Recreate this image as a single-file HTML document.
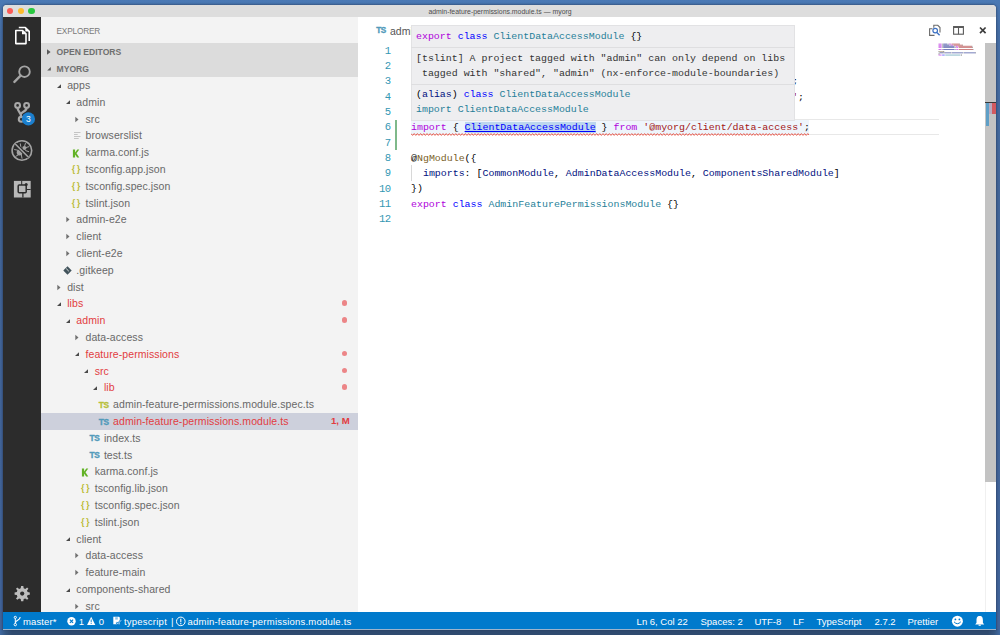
<!DOCTYPE html><html><head><meta charset="utf-8"><style>
*{margin:0;padding:0;box-sizing:border-box}
html,body{width:1000px;height:635px;overflow:hidden}
body{position:relative;font-family:"Liberation Sans",sans-serif;
 background:linear-gradient(180deg,#4a79b5 0%,#466ea5 5%,#436699 30%,#42649a 100%);}
.a{position:absolute}
.row{position:absolute;left:41px;width:317px;height:16.8px;font-size:10.5px;letter-spacing:0.08px;line-height:16.8px;white-space:nowrap}
.st{position:absolute;top:614px;height:16.6px;line-height:16.6px;font-size:9.5px;color:#fff;white-space:nowrap}
.code{font-family:"Liberation Mono",monospace;font-size:9.93px;white-space:pre}
.ln{position:absolute;left:360px;width:30.8px;text-align:right;font-family:"Liberation Mono",monospace;font-size:10.6px;letter-spacing:-0.4px;color:#3497b3;line-height:15.29px;margin-top:1px}
.cl{position:absolute;left:411px;height:15.29px;line-height:15.29px;margin-top:0.9px}
.kw{color:#af00db}.bl{color:#0000ff}.ty{color:#267f99}.s{color:#a31515}.fn{color:#795e26}.vr{color:#001080}.tx{color:#000}
</style></head><body>
<div class="a" style="left:0;top:629px;width:1000px;height:6px;background:linear-gradient(90deg,#4069a0 0%,#34557f 0.6%,#2f4a6f 1.2%,#2f4a6f 98.8%,#34557f 99.4%,#4069a0 100%)"></div>
<div class="a" style="left:3px;top:5px;width:993px;height:624px;border-radius:4px 4px 0 0;background:#fff;overflow:hidden;box-shadow:0 0 2px 1px rgba(20,30,50,0.35)">
<div class="a" style="left:0;top:0;width:993px;height:12px;background:#dddddd"></div>
</div>
<div class="a" style="left:7.00px;top:7.60px;width:6.4px;height:6.4px;border-radius:50%;background:#fc5b57"></div>
<div class="a" style="left:17.60px;top:7.60px;width:6.4px;height:6.4px;border-radius:50%;background:#fdbc2e"></div>
<div class="a" style="left:28.30px;top:7.60px;width:6.4px;height:6.4px;border-radius:50%;background:#28c840"></div>
<div class="a" style="left:300px;top:7px;width:400px;text-align:center;font-size:6.9px;line-height:10px;color:#4d4d4d">admin-feature-permissions.module.ts — myorg</div>
<div class="a" style="left:3px;top:17px;width:38px;height:595.5px;background:#2c2c2c"></div>
<svg class="a" style="left:0;top:0" width="45" height="635" viewBox="0 0 45 635">
<g fill="none" stroke="#ffffff" stroke-width="1.6" stroke-linejoin="round">
 <path d="M18.8 27.5 H25.3 L29.2 31.4 V41"/>
 <path d="M15.8 30.5 H22.6 L26 33.9 V43.6 H15.8 Z"/>
</g>
<path d="M22 30.6 V34.3 H25.8 Z" fill="#fff"/>
<path d="M25.3 27.5 V31.4 H29.2 Z" fill="#fff"/>
<g fill="none" stroke="#a4a4a4" stroke-width="1.9" stroke-linecap="round">
 <circle cx="24.5" cy="71.7" r="5.3"/>
 <path d="M20.6 75.7 L14.4 81.9" stroke-width="2.4"/>
</g>
<g fill="none" stroke="#a8a8a8" stroke-width="2.1">
 <circle cx="17.6" cy="105.4" r="2.4"/>
 <circle cx="26.6" cy="105.4" r="2.4"/>
 <circle cx="21.2" cy="119.3" r="2.4"/>
 <path d="M17.6 107.8 C17.6 112.5 21.2 111.5 21.2 116.9" stroke-width="2.3"/>
 <path d="M26.6 107.8 C26.6 112 21.2 111.5 21.2 114" stroke-width="2.3"/>
</g>
<circle cx="28.4" cy="118.9" r="6.6" fill="#1b7fcd"/>
<text x="28.4" y="122.1" text-anchor="middle" font-family="Liberation Sans" font-size="8.6" fill="#fff">3</text>
<g fill="none" stroke="#a4a4a4" stroke-width="1.6">
 <circle cx="21.9" cy="150.5" r="9.8"/>
</g>
<g stroke="#a4a4a4" stroke-width="1" fill="none" stroke-linecap="round">
 <path d="M18.2 150.3 L14.6 149.6"/>
 <path d="M18.4 154.8 L15.8 156.3"/>
 <path d="M21.3 154.6 L22 158.3"/>
 <path d="M20.9 147.6 L20.3 143.8"/>
 <path d="M24.6 146.1 L25.4 143.5"/>
 <path d="M26.1 147.5 L28.8 146.7"/>
 <path d="M25.6 150.6 L28.6 151.6"/>
</g>
<g fill="#a4a4a4">
 <ellipse cx="19.6" cy="152.4" rx="2.9" ry="3"/>
 <circle cx="24.4" cy="148" r="2.1"/>
</g>
<path d="M15.3 144 L28.5 157.2" stroke="#2c2c2c" stroke-width="3.4"/>
<path d="M15.3 144 L28.5 157.2" stroke="#a4a4a4" stroke-width="1.6"/>
<rect x="13.9" y="180.9" width="16.8" height="16.6" fill="#b8b8b8"/>
<g fill="none" stroke="#2c2c2c">
 <rect x="18.2" y="185.05" width="8" height="7.8" rx="1" stroke-width="1.5"/>
 <path d="M21.7 180.9 V185" stroke-width="1"/>
 <path d="M22.9 192.8 V197.5" stroke-width="1.3"/>
 <path d="M26.9 189.5 H30.7" stroke-width="1"/>
</g>
<circle cx="26.2" cy="184.4" r="1.5" fill="#2c2c2c"/>
<g fill="#bdbdbd">
 <path d="M22.2 586 L23.3 586 L23.7 588.3 L25.3 588.9 L27.1 587.4 L28.4 588.7 L27 590.5 L27.6 592.1 L29.8 592.5 L29.8 594.7 L27.6 595.1 L27 596.7 L28.4 598.5 L27.1 599.8 L25.3 598.4 L23.7 599 L23.3 601.2 L21.1 601.2 L20.7 599 L19.1 598.4 L17.3 599.8 L16 598.5 L17.4 596.7 L16.8 595.1 L14.6 594.7 L14.6 592.5 L16.8 592.1 L17.4 590.5 L16 588.7 L17.3 587.4 L19.1 588.9 L20.7 588.3 L21.1 586 Z"/>
</g>
<circle cx="22.2" cy="593.6" r="2.1" fill="#2c2c2c"/>
</svg>
<div class="a" style="left:41px;top:17px;width:317px;height:595.5px;background:#f3f3f3"></div>
<div class="a" style="left:56.5px;top:26px;font-size:8.3px;line-height:10px;color:#7a7a7a;letter-spacing:-0.2px">EXPLORER</div>
<div class="a" style="left:41px;top:43.3px;width:317px;height:33.7px;background:#dcdcdc"></div>
<div class="a" style="left:56.5px;top:44px;font-size:8.6px;line-height:16.8px;font-weight:bold;color:#6f6f6f">OPEN EDITORS</div>
<div class="a" style="left:56.5px;top:60.8px;font-size:8.6px;line-height:16.8px;font-weight:bold;color:#6f6f6f">MYORG</div>
<svg class="a" style="left:46px;top:48px" width="6" height="8" viewBox="0 0 6 8"><path d="M1 1.2 L4.6 4 L1 6.8 Z" fill="#5a5a5a"/></svg>
<svg class="a" style="left:46px;top:65.5px" width="6" height="6" viewBox="0 0 6 6"><path d="M4.8 1 V4.6 H1.2 Z" fill="#5a5a5a"/></svg>
<div class="a" style="left:41px;top:17px;width:317px;height:595.5px;overflow:hidden">
<div class="row" style="left:0;top:60.00px;">
<svg class="a" style="left:14.50px;top:6.5px" width="6" height="6" viewBox="0 0 6 6"><path d="M5 0.3 V4.1 H1 Z" fill="#4a4a4a"/></svg>
<div class="a" style="left:26.20px;top:0px;color:#686868">apps</div>
</div>
<div class="row" style="left:0;top:76.80px;">
<svg class="a" style="left:23.67px;top:6.5px" width="6" height="6" viewBox="0 0 6 6"><path d="M5 0.3 V4.1 H1 Z" fill="#4a4a4a"/></svg>
<div class="a" style="left:35.37px;top:0px;color:#686868">admin</div>
</div>
<div class="row" style="left:0;top:93.60px;">
<svg class="a" style="left:33.04px;top:5px" width="6" height="7" viewBox="0 0 6 7"><path d="M1.3 0.8 L4.5 3.5 L1.3 6.2 Z" fill="#707070"/></svg>
<div class="a" style="left:44.54px;top:0px;color:#686868">src</div>
</div>
<div class="row" style="left:0;top:110.40px;">
<svg class="a" style="left:33.34px;top:4.1px" width="8" height="9" viewBox="0 0 8 9"><path d="M0 1.5h6.5M0 3.5h3.7M0 5.5h6.5M0 7.5h4.7" stroke="#c4c4c4" stroke-width="1"/></svg>
<div class="a" style="left:44.54px;top:0px;color:#686868">browserslist</div>
</div>
<div class="row" style="left:0;top:127.20px;">
<svg class="a" style="left:31.04px;top:4.5px" width="8" height="9" viewBox="0 0 8 9"><path d="M0.9 0.5 H3.1 V3.5 L5.3 0.5 H7.3 L4.5 4.2 L7.3 8.4 H5.1 L3.1 5.4 V8.4 H0.9 Z" fill="#62b226"/></svg>
<div class="a" style="left:44.54px;top:0px;color:#686868">karma.conf.js</div>
</div>
<div class="row" style="left:0;top:144.00px;">
<div class="a" style="left:30.74px;top:0;font-size:9px;font-weight:bold;color:#bcbc38;line-height:16px;letter-spacing:1.6px">{}</div>
<div class="a" style="left:44.54px;top:0px;color:#686868">tsconfig.app.json</div>
</div>
<div class="row" style="left:0;top:160.80px;">
<div class="a" style="left:30.74px;top:0;font-size:9px;font-weight:bold;color:#bcbc38;line-height:16px;letter-spacing:1.6px">{}</div>
<div class="a" style="left:44.54px;top:0px;color:#686868">tsconfig.spec.json</div>
</div>
<div class="row" style="left:0;top:177.60px;">
<div class="a" style="left:30.74px;top:0;font-size:9px;font-weight:bold;color:#bcbc38;line-height:16px;letter-spacing:1.6px">{}</div>
<div class="a" style="left:44.54px;top:0px;color:#686868">tslint.json</div>
</div>
<div class="row" style="left:0;top:194.40px;">
<svg class="a" style="left:23.87px;top:5px" width="6" height="7" viewBox="0 0 6 7"><path d="M1.3 0.8 L4.5 3.5 L1.3 6.2 Z" fill="#707070"/></svg>
<div class="a" style="left:35.37px;top:0px;color:#686868">admin-e2e</div>
</div>
<div class="row" style="left:0;top:211.20px;">
<svg class="a" style="left:23.87px;top:5px" width="6" height="7" viewBox="0 0 6 7"><path d="M1.3 0.8 L4.5 3.5 L1.3 6.2 Z" fill="#707070"/></svg>
<div class="a" style="left:35.37px;top:0px;color:#686868">client</div>
</div>
<div class="row" style="left:0;top:228.00px;">
<svg class="a" style="left:23.87px;top:5px" width="6" height="7" viewBox="0 0 6 7"><path d="M1.3 0.8 L4.5 3.5 L1.3 6.2 Z" fill="#707070"/></svg>
<div class="a" style="left:35.37px;top:0px;color:#686868">client-e2e</div>
</div>
<div class="row" style="left:0;top:244.80px;">
<svg class="a" style="left:22.17px;top:3.8px" width="9" height="9" viewBox="0 0 9 9"><path d="M4.5 0.3 L8.7 4.5 L4.5 8.7 L0.3 4.5 Z" fill="#41535b"/><path d="M3.2 2.6 L5.8 5.2" stroke="#f3f3f3" stroke-width="0.9"/></svg>
<div class="a" style="left:35.37px;top:0px;color:#686868">.gitkeep</div>
</div>
<div class="row" style="left:0;top:261.60px;">
<svg class="a" style="left:14.70px;top:5px" width="6" height="7" viewBox="0 0 6 7"><path d="M1.3 0.8 L4.5 3.5 L1.3 6.2 Z" fill="#707070"/></svg>
<div class="a" style="left:26.20px;top:0px;color:#686868">dist</div>
</div>
<div class="row" style="left:0;top:278.40px;">
<svg class="a" style="left:14.50px;top:6.5px" width="6" height="6" viewBox="0 0 6 6"><path d="M5 0.3 V4.1 H1 Z" fill="#4a4a4a"/></svg>
<div class="a" style="left:26.20px;top:0px;color:#e23c3f">libs</div>
<div class="a" style="left:300.9px;top:5.1px;width:5.6px;height:5.6px;border-radius:50%;background:#ec8587"></div>
</div>
<div class="row" style="left:0;top:295.20px;">
<svg class="a" style="left:23.67px;top:6.5px" width="6" height="6" viewBox="0 0 6 6"><path d="M5 0.3 V4.1 H1 Z" fill="#4a4a4a"/></svg>
<div class="a" style="left:35.37px;top:0px;color:#e23c3f">admin</div>
<div class="a" style="left:300.9px;top:5.1px;width:5.6px;height:5.6px;border-radius:50%;background:#ec8587"></div>
</div>
<div class="row" style="left:0;top:312.00px;">
<svg class="a" style="left:33.04px;top:5px" width="6" height="7" viewBox="0 0 6 7"><path d="M1.3 0.8 L4.5 3.5 L1.3 6.2 Z" fill="#707070"/></svg>
<div class="a" style="left:44.54px;top:0px;color:#686868">data-access</div>
</div>
<div class="row" style="left:0;top:328.80px;">
<svg class="a" style="left:32.84px;top:6.5px" width="6" height="6" viewBox="0 0 6 6"><path d="M5 0.3 V4.1 H1 Z" fill="#4a4a4a"/></svg>
<div class="a" style="left:44.54px;top:0px;color:#e23c3f">feature-permissions</div>
<div class="a" style="left:300.9px;top:5.1px;width:5.6px;height:5.6px;border-radius:50%;background:#ec8587"></div>
</div>
<div class="row" style="left:0;top:345.60px;">
<svg class="a" style="left:42.01px;top:6.5px" width="6" height="6" viewBox="0 0 6 6"><path d="M5 0.3 V4.1 H1 Z" fill="#4a4a4a"/></svg>
<div class="a" style="left:53.71px;top:0px;color:#e23c3f">src</div>
<div class="a" style="left:300.9px;top:5.1px;width:5.6px;height:5.6px;border-radius:50%;background:#ec8587"></div>
</div>
<div class="row" style="left:0;top:362.40px;">
<svg class="a" style="left:51.18px;top:6.5px" width="6" height="6" viewBox="0 0 6 6"><path d="M5 0.3 V4.1 H1 Z" fill="#4a4a4a"/></svg>
<div class="a" style="left:62.88px;top:0px;color:#e23c3f">lib</div>
<div class="a" style="left:300.9px;top:5.1px;width:5.6px;height:5.6px;border-radius:50%;background:#ec8587"></div>
</div>
<div class="row" style="left:0;top:379.20px;">
<div class="a" style="left:57.75px;top:0.5px;font-size:8.3px;font-weight:bold;color:#b8c03a;line-height:16px;letter-spacing:-0.3px;-webkit-text-stroke:0.35px #b8c03a">TS</div>
<div class="a" style="left:72.05px;top:0px;color:#686868">admin-feature-permissions.module.spec.ts</div>
</div>
<div class="row" style="left:0;top:396.00px;background:#cdd0dc;">
<div class="a" style="left:57.75px;top:0.5px;font-size:8.3px;font-weight:bold;color:#519aba;line-height:16px;letter-spacing:-0.3px;-webkit-text-stroke:0.35px #519aba">TS</div>
<div class="a" style="left:72.05px;top:0px;color:#e23c3f">admin-feature-permissions.module.ts</div>
<div class="a" style="left:290px;top:0px;color:#e23c3f;font-weight:bold;font-size:9.6px;letter-spacing:0">1, M</div>
</div>
<div class="row" style="left:0;top:412.80px;">
<div class="a" style="left:48.58px;top:0.5px;font-size:8.3px;font-weight:bold;color:#519aba;line-height:16px;letter-spacing:-0.3px;-webkit-text-stroke:0.35px #519aba">TS</div>
<div class="a" style="left:62.88px;top:0px;color:#686868">index.ts</div>
</div>
<div class="row" style="left:0;top:429.60px;">
<div class="a" style="left:48.58px;top:0.5px;font-size:8.3px;font-weight:bold;color:#519aba;line-height:16px;letter-spacing:-0.3px;-webkit-text-stroke:0.35px #519aba">TS</div>
<div class="a" style="left:62.88px;top:0px;color:#686868">test.ts</div>
</div>
<div class="row" style="left:0;top:446.40px;">
<svg class="a" style="left:40.21px;top:4.5px" width="8" height="9" viewBox="0 0 8 9"><path d="M0.9 0.5 H3.1 V3.5 L5.3 0.5 H7.3 L4.5 4.2 L7.3 8.4 H5.1 L3.1 5.4 V8.4 H0.9 Z" fill="#62b226"/></svg>
<div class="a" style="left:53.71px;top:0px;color:#686868">karma.conf.js</div>
</div>
<div class="row" style="left:0;top:463.20px;">
<div class="a" style="left:39.91px;top:0;font-size:9px;font-weight:bold;color:#bcbc38;line-height:16px;letter-spacing:1.6px">{}</div>
<div class="a" style="left:53.71px;top:0px;color:#686868">tsconfig.lib.json</div>
</div>
<div class="row" style="left:0;top:480.00px;">
<div class="a" style="left:39.91px;top:0;font-size:9px;font-weight:bold;color:#bcbc38;line-height:16px;letter-spacing:1.6px">{}</div>
<div class="a" style="left:53.71px;top:0px;color:#686868">tsconfig.spec.json</div>
</div>
<div class="row" style="left:0;top:496.80px;">
<div class="a" style="left:39.91px;top:0;font-size:9px;font-weight:bold;color:#bcbc38;line-height:16px;letter-spacing:1.6px">{}</div>
<div class="a" style="left:53.71px;top:0px;color:#686868">tslint.json</div>
</div>
<div class="row" style="left:0;top:513.60px;">
<svg class="a" style="left:23.67px;top:6.5px" width="6" height="6" viewBox="0 0 6 6"><path d="M5 0.3 V4.1 H1 Z" fill="#4a4a4a"/></svg>
<div class="a" style="left:35.37px;top:0px;color:#686868">client</div>
</div>
<div class="row" style="left:0;top:530.40px;">
<svg class="a" style="left:33.04px;top:5px" width="6" height="7" viewBox="0 0 6 7"><path d="M1.3 0.8 L4.5 3.5 L1.3 6.2 Z" fill="#707070"/></svg>
<div class="a" style="left:44.54px;top:0px;color:#686868">data-access</div>
</div>
<div class="row" style="left:0;top:547.20px;">
<svg class="a" style="left:33.04px;top:5px" width="6" height="7" viewBox="0 0 6 7"><path d="M1.3 0.8 L4.5 3.5 L1.3 6.2 Z" fill="#707070"/></svg>
<div class="a" style="left:44.54px;top:0px;color:#686868">feature-main</div>
</div>
<div class="row" style="left:0;top:564.00px;">
<svg class="a" style="left:23.67px;top:6.5px" width="6" height="6" viewBox="0 0 6 6"><path d="M5 0.3 V4.1 H1 Z" fill="#4a4a4a"/></svg>
<div class="a" style="left:35.37px;top:0px;color:#686868">components-shared</div>
</div>
<div class="row" style="left:0;top:580.80px;">
<svg class="a" style="left:33.04px;top:5px" width="6" height="7" viewBox="0 0 6 7"><path d="M1.3 0.8 L4.5 3.5 L1.3 6.2 Z" fill="#707070"/></svg>
<div class="a" style="left:44.54px;top:0px;color:#686868">src</div>
</div>
</div>
<div class="a" style="left:376.2px;top:24.8px;font-size:8.2px;font-weight:bold;color:#519aba;line-height:12px;letter-spacing:-0.5px;-webkit-text-stroke:0.35px #519aba">TS</div>
<div class="a" style="left:390px;top:24px;font-size:10.5px;color:#555;line-height:14px">admin-feature-permissions.module.ts</div>
<div class="ln" style="top:42.90px">1</div>
<div class="ln" style="top:58.19px">2</div>
<div class="ln" style="top:73.48px">3</div>
<div class="ln" style="top:88.77px">4</div>
<div class="ln" style="top:104.06px">5</div>
<div class="ln" style="top:119.35px">6</div>
<div class="ln" style="top:134.64px">7</div>
<div class="ln" style="top:149.93px">8</div>
<div class="ln" style="top:165.22px">9</div>
<div class="ln" style="top:180.51px">10</div>
<div class="ln" style="top:195.80px">11</div>
<div class="ln" style="top:211.09px">12</div>
<div class="a" style="left:411px;top:119.45px;width:527.6px;height:15.45px;border-top:1px solid #e8e8e8;border-bottom:1px solid #e8e8e8"></div>
<div class="a" style="left:411px;top:119.75px;width:398px;height:14.09px;background:#eef5fb"></div>
<div class="a" style="left:395px;top:119.8px;width:2.2px;height:30.7px;background:#7fb98a"></div>
<div class="a" style="left:411px;top:165.22px;width:1px;height:15.29px;background:#d8d8d8"></div>
<div class="cl code" style="top:42.90px"><span class="kw">import</span><span class="tx"> { </span><span class="vr">NgModule</span><span class="tx"> } </span><span class="kw">from</span> <span class="s">'@angular/core'</span><span class="tx">;</span></div>
<div class="cl code" style="top:58.19px"><span class="kw">import</span><span class="tx"> { </span><span class="vr">CommonModule</span><span class="tx"> } </span><span class="kw">from</span> <span class="s">'@angular/common'</span><span class="tx">;</span></div>
<div class="cl code" style="top:73.48px"><span class="kw">import</span><span class="tx"> { </span><span class="vr">AdminDataAccessModule</span><span class="tx"> } </span><span class="kw">from</span> <span class="s">'@myorg/admin/data-access'</span><span class="tx">;</span></div>
<div class="cl code" style="top:88.77px"><span class="kw">import</span><span class="tx"> { </span><span class="vr">ComponentsSharedModule</span><span class="tx"> } </span><span class="kw">from</span> <span class="s">'@myorg/components-shared'</span><span class="tx">;</span></div>
<div class="cl code" style="top:104.06px"></div>
<div class="cl code" style="top:119.35px"><span class="kw">import</span><span class="tx"> { </span><span class="vr" style="background:#bcd6ee;color:#0000ff;text-decoration:underline">ClientDataAccessModule</span><span class="tx"> } </span><span class="kw">from</span> <span class="s">'@myorg/client/data-access'</span><span class="tx">;</span></div>
<div class="cl code" style="top:134.64px"></div>
<div class="cl code" style="top:149.93px"><span class="tx">@</span><span class="fn">NgModule</span><span class="tx">({</span></div>
<div class="cl code" style="top:165.22px"><span class="tx">  </span><span class="vr">imports</span><span class="tx">: [</span><span class="vr">CommonModule</span><span class="tx">, </span><span class="vr">AdminDataAccessModule</span><span class="tx">, </span><span class="vr">ComponentsSharedModule</span><span class="tx">]</span></div>
<div class="cl code" style="top:180.51px"><span class="tx">})</span></div>
<div class="cl code" style="top:195.80px"><span class="kw">export</span> <span class="bl">class</span> <span class="ty">AdminFeaturePermissionsModule</span><span class="tx"> {}</span></div>
<div class="cl code" style="top:211.09px"></div>
<svg class="a" style="left:411px;top:132.65px" width="398" height="3" viewBox="0 0 398 3"><path d="M0.0 0.6 L1.6 2.4 L3.2 0.6 L4.8 2.4 L6.4 0.6 L8.0 2.4 L9.6 0.6 L11.2 2.4 L12.8 0.6 L14.4 2.4 L16.0 0.6 L17.6 2.4 L19.2 0.6 L20.8 2.4 L22.4 0.6 L24.0 2.4 L25.6 0.6 L27.2 2.4 L28.8 0.6 L30.4 2.4 L32.0 0.6 L33.6 2.4 L35.2 0.6 L36.8 2.4 L38.4 0.6 L40.0 2.4 L41.6 0.6 L43.2 2.4 L44.8 0.6 L46.4 2.4 L48.0 0.6 L49.6 2.4 L51.2 0.6 L52.8 2.4 L54.4 0.6 L56.0 2.4 L57.6 0.6 L59.2 2.4 L60.8 0.6 L62.4 2.4 L64.0 0.6 L65.6 2.4 L67.2 0.6 L68.8 2.4 L70.4 0.6 L72.0 2.4 L73.6 0.6 L75.2 2.4 L76.8 0.6 L78.4 2.4 L80.0 0.6 L81.6 2.4 L83.2 0.6 L84.8 2.4 L86.4 0.6 L88.0 2.4 L89.6 0.6 L91.2 2.4 L92.8 0.6 L94.4 2.4 L96.0 0.6 L97.6 2.4 L99.2 0.6 L100.8 2.4 L102.4 0.6 L104.0 2.4 L105.6 0.6 L107.2 2.4 L108.8 0.6 L110.4 2.4 L112.0 0.6 L113.6 2.4 L115.2 0.6 L116.8 2.4 L118.4 0.6 L120.0 2.4 L121.6 0.6 L123.2 2.4 L124.8 0.6 L126.4 2.4 L128.0 0.6 L129.6 2.4 L131.2 0.6 L132.8 2.4 L134.4 0.6 L136.0 2.4 L137.6 0.6 L139.2 2.4 L140.8 0.6 L142.4 2.4 L144.0 0.6 L145.6 2.4 L147.2 0.6 L148.8 2.4 L150.4 0.6 L152.0 2.4 L153.6 0.6 L155.2 2.4 L156.8 0.6 L158.4 2.4 L160.0 0.6 L161.6 2.4 L163.2 0.6 L164.8 2.4 L166.4 0.6 L168.0 2.4 L169.6 0.6 L171.2 2.4 L172.8 0.6 L174.4 2.4 L176.0 0.6 L177.6 2.4 L179.2 0.6 L180.8 2.4 L182.4 0.6 L184.0 2.4 L185.6 0.6 L187.2 2.4 L188.8 0.6 L190.4 2.4 L192.0 0.6 L193.6 2.4 L195.2 0.6 L196.8 2.4 L198.4 0.6 L200.0 2.4 L201.6 0.6 L203.2 2.4 L204.8 0.6 L206.4 2.4 L208.0 0.6 L209.6 2.4 L211.2 0.6 L212.8 2.4 L214.4 0.6 L216.0 2.4 L217.6 0.6 L219.2 2.4 L220.8 0.6 L222.4 2.4 L224.0 0.6 L225.6 2.4 L227.2 0.6 L228.8 2.4 L230.4 0.6 L232.0 2.4 L233.6 0.6 L235.2 2.4 L236.8 0.6 L238.4 2.4 L240.0 0.6 L241.6 2.4 L243.2 0.6 L244.8 2.4 L246.4 0.6 L248.0 2.4 L249.6 0.6 L251.2 2.4 L252.8 0.6 L254.4 2.4 L256.0 0.6 L257.6 2.4 L259.2 0.6 L260.8 2.4 L262.4 0.6 L264.0 2.4 L265.6 0.6 L267.2 2.4 L268.8 0.6 L270.4 2.4 L272.0 0.6 L273.6 2.4 L275.2 0.6 L276.8 2.4 L278.4 0.6 L280.0 2.4 L281.6 0.6 L283.2 2.4 L284.8 0.6 L286.4 2.4 L288.0 0.6 L289.6 2.4 L291.2 0.6 L292.8 2.4 L294.4 0.6 L296.0 2.4 L297.6 0.6 L299.2 2.4 L300.8 0.6 L302.4 2.4 L304.0 0.6 L305.6 2.4 L307.2 0.6 L308.8 2.4 L310.4 0.6 L312.0 2.4 L313.6 0.6 L315.2 2.4 L316.8 0.6 L318.4 2.4 L320.0 0.6 L321.6 2.4 L323.2 0.6 L324.8 2.4 L326.4 0.6 L328.0 2.4 L329.6 0.6 L331.2 2.4 L332.8 0.6 L334.4 2.4 L336.0 0.6 L337.6 2.4 L339.2 0.6 L340.8 2.4 L342.4 0.6 L344.0 2.4 L345.6 0.6 L347.2 2.4 L348.8 0.6 L350.4 2.4 L352.0 0.6 L353.6 2.4 L355.2 0.6 L356.8 2.4 L358.4 0.6 L360.0 2.4 L361.6 0.6 L363.2 2.4 L364.8 0.6 L366.4 2.4 L368.0 0.6 L369.6 2.4 L371.2 0.6 L372.8 2.4 L374.4 0.6 L376.0 2.4 L377.6 0.6 L379.2 2.4 L380.8 0.6 L382.4 2.4 L384.0 0.6 L385.6 2.4 L387.2 0.6 L388.8 2.4 L390.4 0.6 L392.0 2.4 L393.6 0.6 L395.2 2.4 L396.8 0.6 L398.4 2.4" stroke="#e51400" stroke-width="0.9" fill="none" opacity="0.75"/></svg>
<div class="a" style="left:411px;top:25px;width:384px;height:95.8px;background:#eeeef0;border:1px solid #e2e2e4"></div>
<div class="a" style="left:411px;top:46.8px;width:384px;height:1px;background:#dedee0"></div>
<div class="a" style="left:411px;top:83.8px;width:384px;height:1px;background:#dedee0"></div>
<div class="a code" style="left:416px;top:28.6px;line-height:15px"><span class="kw">export</span> <span class="bl">class</span> <span class="ty">ClientDataAccessModule</span><span class="tx"> {}</span></div>
<div class="a code" style="left:416px;top:50.5px;line-height:15px;color:#333">[tslint] A project tagged with "admin" can only depend on libs
 tagged with "shared", "admin" (nx-enforce-module-boundaries)</div>
<div class="a code" style="left:416px;top:87.3px;line-height:15px"><span class="tx">(</span><span class="vr">alias</span><span class="tx">) </span><span class="bl">class</span> <span class="ty">ClientDataAccessModule</span>
<span class="ty">import ClientDataAccessModule</span></div>
<svg class="a" style="left:0;top:0" width="1000" height="60" viewBox="0 0 1000 60">
<g fill="none" stroke="#6b6b6b" stroke-width="1.1">
 <path d="M932.5 28.7 H929.6 V35.4 H934.5"/>
 <path d="M933.8 27.8 V25.3 H937.8 L940 27.5 V32.5"/>
</g>
<g fill="none" stroke="#3d72c4" stroke-width="1.2">
 <circle cx="935.2" cy="30.6" r="2.3"/>
 <path d="M936.9 32.4 L939.6 35.2" stroke-width="1.4"/>
</g>
<g fill="none" stroke="#5a5a5a">
 <rect x="953.6" y="26.6" width="9.8" height="7.6" stroke-width="1.1"/>
 <path d="M953.6 27.2 H963.4" stroke-width="1.6"/>
 <path d="M958.5 27 V34.2" stroke-width="1.1"/>
</g>
<path d="M980 27.5 L985.6 33.1 M985.6 27.5 L980 33.1" stroke="#3c3c3c" stroke-width="1.7"/>
</svg>
<svg class="a" style="left:0;top:0" width="1000" height="60" viewBox="0 0 1000 60"><rect x="938.50" y="43.60" width="3.12" height="0.9" fill="#af00db" opacity="0.6"/><rect x="942.14" y="43.60" width="0.52" height="0.9" fill="#000000" opacity="0.6"/><rect x="943.18" y="43.60" width="4.16" height="0.9" fill="#001080" opacity="0.6"/><rect x="947.86" y="43.60" width="0.52" height="0.9" fill="#000000" opacity="0.6"/><rect x="948.90" y="43.60" width="2.08" height="0.9" fill="#af00db" opacity="0.6"/><rect x="951.50" y="43.60" width="7.80" height="0.9" fill="#a31515" opacity="0.6"/><rect x="959.30" y="43.60" width="0.52" height="0.9" fill="#000000" opacity="0.6"/><rect x="938.50" y="44.70" width="3.12" height="0.9" fill="#af00db" opacity="0.6"/><rect x="942.14" y="44.70" width="0.52" height="0.9" fill="#000000" opacity="0.6"/><rect x="943.18" y="44.70" width="6.24" height="0.9" fill="#001080" opacity="0.6"/><rect x="949.94" y="44.70" width="0.52" height="0.9" fill="#000000" opacity="0.6"/><rect x="950.98" y="44.70" width="2.08" height="0.9" fill="#af00db" opacity="0.6"/><rect x="953.58" y="44.70" width="8.84" height="0.9" fill="#a31515" opacity="0.6"/><rect x="962.42" y="44.70" width="0.52" height="0.9" fill="#000000" opacity="0.6"/><rect x="938.50" y="45.80" width="3.12" height="0.9" fill="#af00db" opacity="0.6"/><rect x="942.14" y="45.80" width="0.52" height="0.9" fill="#000000" opacity="0.6"/><rect x="943.18" y="45.80" width="10.92" height="0.9" fill="#001080" opacity="0.6"/><rect x="954.62" y="45.80" width="0.52" height="0.9" fill="#000000" opacity="0.6"/><rect x="955.66" y="45.80" width="2.08" height="0.9" fill="#af00db" opacity="0.6"/><rect x="958.26" y="45.80" width="13.52" height="0.9" fill="#a31515" opacity="0.6"/><rect x="971.78" y="45.80" width="0.52" height="0.9" fill="#000000" opacity="0.6"/><rect x="938.50" y="46.90" width="3.12" height="0.9" fill="#af00db" opacity="0.6"/><rect x="942.14" y="46.90" width="0.52" height="0.9" fill="#000000" opacity="0.6"/><rect x="943.18" y="46.90" width="11.44" height="0.9" fill="#001080" opacity="0.6"/><rect x="955.14" y="46.90" width="0.52" height="0.9" fill="#000000" opacity="0.6"/><rect x="956.18" y="46.90" width="2.08" height="0.9" fill="#af00db" opacity="0.6"/><rect x="958.78" y="46.90" width="13.52" height="0.9" fill="#a31515" opacity="0.6"/><rect x="972.30" y="46.90" width="0.52" height="0.9" fill="#000000" opacity="0.6"/><rect x="938.50" y="49.10" width="3.12" height="0.9" fill="#af00db" opacity="0.6"/><rect x="942.14" y="49.10" width="0.52" height="0.9" fill="#000000" opacity="0.6"/><rect x="943.18" y="49.10" width="11.44" height="0.9" fill="#001080" opacity="0.6"/><rect x="955.14" y="49.10" width="0.52" height="0.9" fill="#000000" opacity="0.6"/><rect x="956.18" y="49.10" width="2.08" height="0.9" fill="#af00db" opacity="0.6"/><rect x="958.78" y="49.10" width="14.04" height="0.9" fill="#a31515" opacity="0.6"/><rect x="972.82" y="49.10" width="0.52" height="0.9" fill="#000000" opacity="0.6"/><rect x="938.50" y="51.30" width="0.52" height="0.9" fill="#000000" opacity="0.6"/><rect x="939.02" y="51.30" width="4.16" height="0.9" fill="#795e26" opacity="0.6"/><rect x="943.18" y="51.30" width="1.04" height="0.9" fill="#000000" opacity="0.6"/><rect x="939.54" y="52.40" width="3.64" height="0.9" fill="#001080" opacity="0.6"/><rect x="943.18" y="52.40" width="0.52" height="0.9" fill="#000000" opacity="0.6"/><rect x="944.22" y="52.40" width="0.52" height="0.9" fill="#000000" opacity="0.6"/><rect x="944.74" y="52.40" width="6.24" height="0.9" fill="#001080" opacity="0.6"/><rect x="950.98" y="52.40" width="0.52" height="0.9" fill="#000000" opacity="0.6"/><rect x="952.02" y="52.40" width="10.92" height="0.9" fill="#001080" opacity="0.6"/><rect x="962.94" y="52.40" width="0.52" height="0.9" fill="#000000" opacity="0.6"/><rect x="963.98" y="52.40" width="11.44" height="0.9" fill="#001080" opacity="0.6"/><rect x="975.42" y="52.40" width="0.52" height="0.9" fill="#000000" opacity="0.6"/><rect x="938.50" y="53.50" width="1.04" height="0.9" fill="#000000" opacity="0.6"/><rect x="938.50" y="54.60" width="3.12" height="0.9" fill="#af00db" opacity="0.6"/><rect x="942.14" y="54.60" width="2.60" height="0.9" fill="#0000ff" opacity="0.6"/><rect x="945.26" y="54.60" width="15.08" height="0.9" fill="#267f99" opacity="0.6"/><rect x="960.86" y="54.60" width="1.04" height="0.9" fill="#000000" opacity="0.6"/></svg>
<div class="a" style="left:985.2px;top:43.1px;width:10.8px;height:438.9px;background:#c3c3c3"></div>
<div class="a" style="left:985.2px;top:482px;width:1px;height:130px;background:#f0f0f0"></div>
<div class="a" style="left:985.5px;top:102px;width:3px;height:24px;background:#5f9fc6"></div>
<div class="a" style="left:988.6px;top:102px;width:3.6px;height:12px;background:#b9a9bf"></div>
<div class="a" style="left:992.2px;top:102px;width:3.8px;height:12px;background:#d25a5f"></div>
<div class="a" style="left:985.2px;top:101.6px;width:10.8px;height:0.8px;background:#3a3a3a"></div>
<div class="a" style="left:3px;top:612.2px;width:993px;height:16.5px;background:#007acc"></div>
<div class="a" style="left:3px;top:628.7px;width:993px;height:0.8px;background:#9db4cc"></div>
<div class="st" style="left:23.1px;letter-spacing:0.1px">master*</div>
<div class="st" style="left:78.8px;letter-spacing:0px">1</div>
<div class="st" style="left:98.7px;letter-spacing:0px">0</div>
<div class="st" style="left:123.9px;letter-spacing:0.25px">typescript</div>
<div class="st" style="left:171.1px;letter-spacing:0px">|</div>
<div class="st" style="left:187.5px;letter-spacing:0.22px">admin-feature-permissions.module.ts</div>
<div class="st" style="left:636.6px;letter-spacing:0px">Ln 6, Col 22</div>
<div class="st" style="left:700.5px;letter-spacing:0px">Spaces: 2</div>
<div class="st" style="left:754.4px;letter-spacing:0px">UTF-8</div>
<div class="st" style="left:793.0px;letter-spacing:0px">LF</div>
<div class="st" style="left:816.5px;letter-spacing:0px">TypeScript</div>
<div class="st" style="left:874.5px;letter-spacing:0px">2.7.2</div>
<div class="st" style="left:907.5px;letter-spacing:0px">Prettier</div>
<svg class="a" style="left:0;top:600px" width="1000" height="35" viewBox="0 600 1000 35">
<g fill="none" stroke="#fff" stroke-width="1">
 <circle cx="15.3" cy="617.4" r="1.1"/>
 <circle cx="15.3" cy="624.6" r="1.2"/>
 <path d="M15.3 618.5 V623.4"/>
 <path d="M20.2 617 C20.2 620.5 15.8 619.8 15.4 622.6" stroke-width="1.1"/>
</g>
<circle cx="71.5" cy="621.3" r="4.2" fill="#fff"/>
<path d="M69.9 619.7 L73.1 622.9 M73.1 619.7 L69.9 622.9" stroke="#007acc" stroke-width="1.2"/>
<path d="M91.2 616.8 L95.3 625 H87.1 Z" fill="#fff"/>
<path d="M91.2 619.4 V622.2 M91.2 622.9 V623.9" stroke="#007acc" stroke-width="0.9"/>
<path d="M113.3 616.8 H119 L119.8 617.6 V624.3 H113.3 Z" fill="#fff"/>
<rect x="115.2" y="617.2" width="2.6" height="2.4" fill="#8cc4ea"/>
<path d="M116.3 622.4 L117.8 623.9 L121.2 620.2" stroke="#007acc" stroke-width="1.8" fill="none"/>
<path d="M116.3 622.4 L117.8 623.9 L121.2 620.2" stroke="#dfefff" stroke-width="0.8" fill="none"/>
<circle cx="180.8" cy="621.4" r="4.3" fill="none" stroke="#fff" stroke-width="1"/>
<path d="M180.8 618.8 V622.3 M180.8 623.1 V624.2" stroke="#fff" stroke-width="1.1"/>
<circle cx="957.4" cy="621.2" r="5.5" fill="#fff"/>
<circle cx="955.4" cy="619.4" r="0.9" fill="#007acc"/>
<circle cx="959.4" cy="619.4" r="0.9" fill="#007acc"/>
<path d="M954 621.8 Q957.4 625.6 960.8 621.8" stroke="#007acc" stroke-width="1" fill="none"/>
<path d="M979.7 616 C977 616 976.5 618.2 976.5 620.2 V622.7 L975.2 624.4 H984.2 L982.9 622.7 V620.2 C982.9 618.2 982.4 616 979.7 616 Z" fill="#fff"/>
<path d="M978.6 625.2 H980.8" stroke="#fff" stroke-width="1.2"/>
</svg>
</body></html>
